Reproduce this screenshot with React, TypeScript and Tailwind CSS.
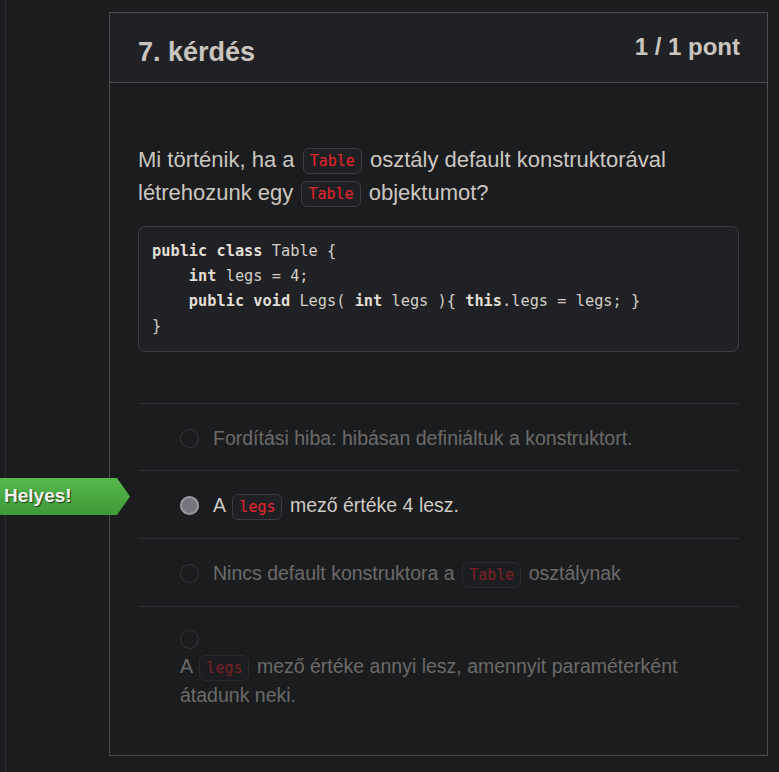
import React from 'react';

const sans = { fontFamily: '"Liberation Sans", Arial, sans-serif' };

// inline code chip, used in question text and answers
const Code = ({ children }: { children: React.ReactNode }) => {
    return (
        <code className="mx-[2px] inline-block rounded-md border border-[#3b3c3f] bg-[#1f2023] px-[6px] py-0 align-middle font-['DejaVu_Sans_Mono',monospace] text-[15px] leading-[24px] text-[#e8242f]">
            {children}
        </code>
    );
};

const Kw = ({ children }: { children: React.ReactNode }) => (
    <span className="font-bold text-[#e2ded6]">{children}</span>
);

interface Option {
    content: React.ReactNode;
    selected: boolean;
    stacked?: boolean;
}

const options: Option[] = [
    { content: <>Fordítási hiba: hibásan definiáltuk a konstruktort.</>, selected: false },
    { content: <>A <Code>legs</Code> mező értéke 4 lesz.</>, selected: true },
    { content: <>Nincs default konstruktora a <Code>Table</Code> osztálynak</>, selected: false },
    {
        content: <>A <Code>legs</Code> mező értéke annyi lesz, amennyit paraméterként átadunk neki.</>,
        selected: false,
        stacked: true,
    },
];

const Radio = ({ selected }: { selected: boolean }) => (
    <span
        className={
            selected
                ? 'block h-[19px] w-[19px] shrink-0 rounded-full border-2 border-[#9b9aa1] bg-[#76757e]'
                : 'block h-[19px] w-[19px] shrink-0 rounded-full border border-[#56575b] bg-transparent'
        }
    />
);

export default function App() {
    return (
        <div className="relative min-h-[772px] w-[779px] overflow-hidden bg-[#1b1c1e]" style={sans}>
            {/* sidebar edge */}
            <div className="absolute left-[5px] top-0 h-full w-px bg-[#2b2c2f]" />

            <div className="pl-[109px] pr-[11px] pt-3">
                <div className="border border-[#4b4b4d]">
                    {/* HEADER */}
                    <div className="flex items-start justify-between border-b border-[#4b4b4d] bg-[#202124] pl-7 pr-[27px] pb-[14px] pt-[23px]">
                        <h2 className="text-[27px] font-bold leading-[32px] text-[#c9c5be]">7. kérdés</h2>
                        <span className="mt-[-1px] text-[24px] font-bold leading-[24px] text-[#c9c5be]">1 / 1 pont</span>
                    </div>

                    {/* BODY */}
                    <div className="px-7 pb-[46px] pt-[60px]">
                        <p className="text-[22px] leading-[33px] text-[#cbc7c0]">
                            Mi történik, ha a <Code>Table</Code> osztály default konstruktorával létrehozunk egy <Code>Table</Code> objektumot?
                        </p>

                        <pre className="mt-[17px] rounded-[7px] border border-[#3b3c3f] bg-[#202124] px-[13px] py-[12px] font-['DejaVu_Sans_Mono',monospace] text-[15.3px] leading-[25px] text-[#d2cec7]">
                            <Kw>public</Kw> <Kw>class</Kw> Table {'{'}{'\n'}
                            {'    '}<Kw>int</Kw> legs = 4;{'\n'}
                            {'    '}<Kw>public</Kw> <Kw>void</Kw> Legs( <Kw>int</Kw> legs ){'{'} <Kw>this</Kw>.legs = legs; {'}'}{'\n'}
                            {'}'}
                        </pre>

                        {/* ANSWERS */}
                        <div className="mt-[51px]">
                            {options.map((opt, i) => (
                                <div key={i} className={'relative' + (i > 0 || true ? ' border-t border-[#2f3033]' : '')}>
                                    {opt.selected && (
                                        <div className="absolute left-[-138px] top-[7px] flex h-[37px] w-[130px] items-center bg-gradient-to-b from-[#55b84b] to-[#3e9a39] pl-1 text-[19px] font-bold text-[#f2f2ee] [clip-path:polygon(0_0,117px_0,130px_50%,117px_100%,0_100%)] [text-shadow:1px_1px_1px_#1d3d1a]">
                                            Helyes!
                                        </div>
                                    )}
                                    <div
                                        className={
                                            (opt.stacked
                                                ? 'flex flex-col items-start gap-[3px] pl-[42px] pr-6 pt-[23px]'
                                                : 'flex items-center gap-[14px] pb-[18px] pl-[42px] pr-6 pt-[20px]') +
                                            (opt.selected ? ' text-[#cfcbc4]' : ' opacity-[0.45] text-[#cbc7c0]')
                                        }
                                    >
                                        <Radio selected={opt.selected} />
                                        <span className="text-[19.5px] leading-[28px]">{opt.content}</span>
                                    </div>
                                </div>
                            ))}
                        </div>
                    </div>
                </div>
            </div>
        </div>
    );
}
